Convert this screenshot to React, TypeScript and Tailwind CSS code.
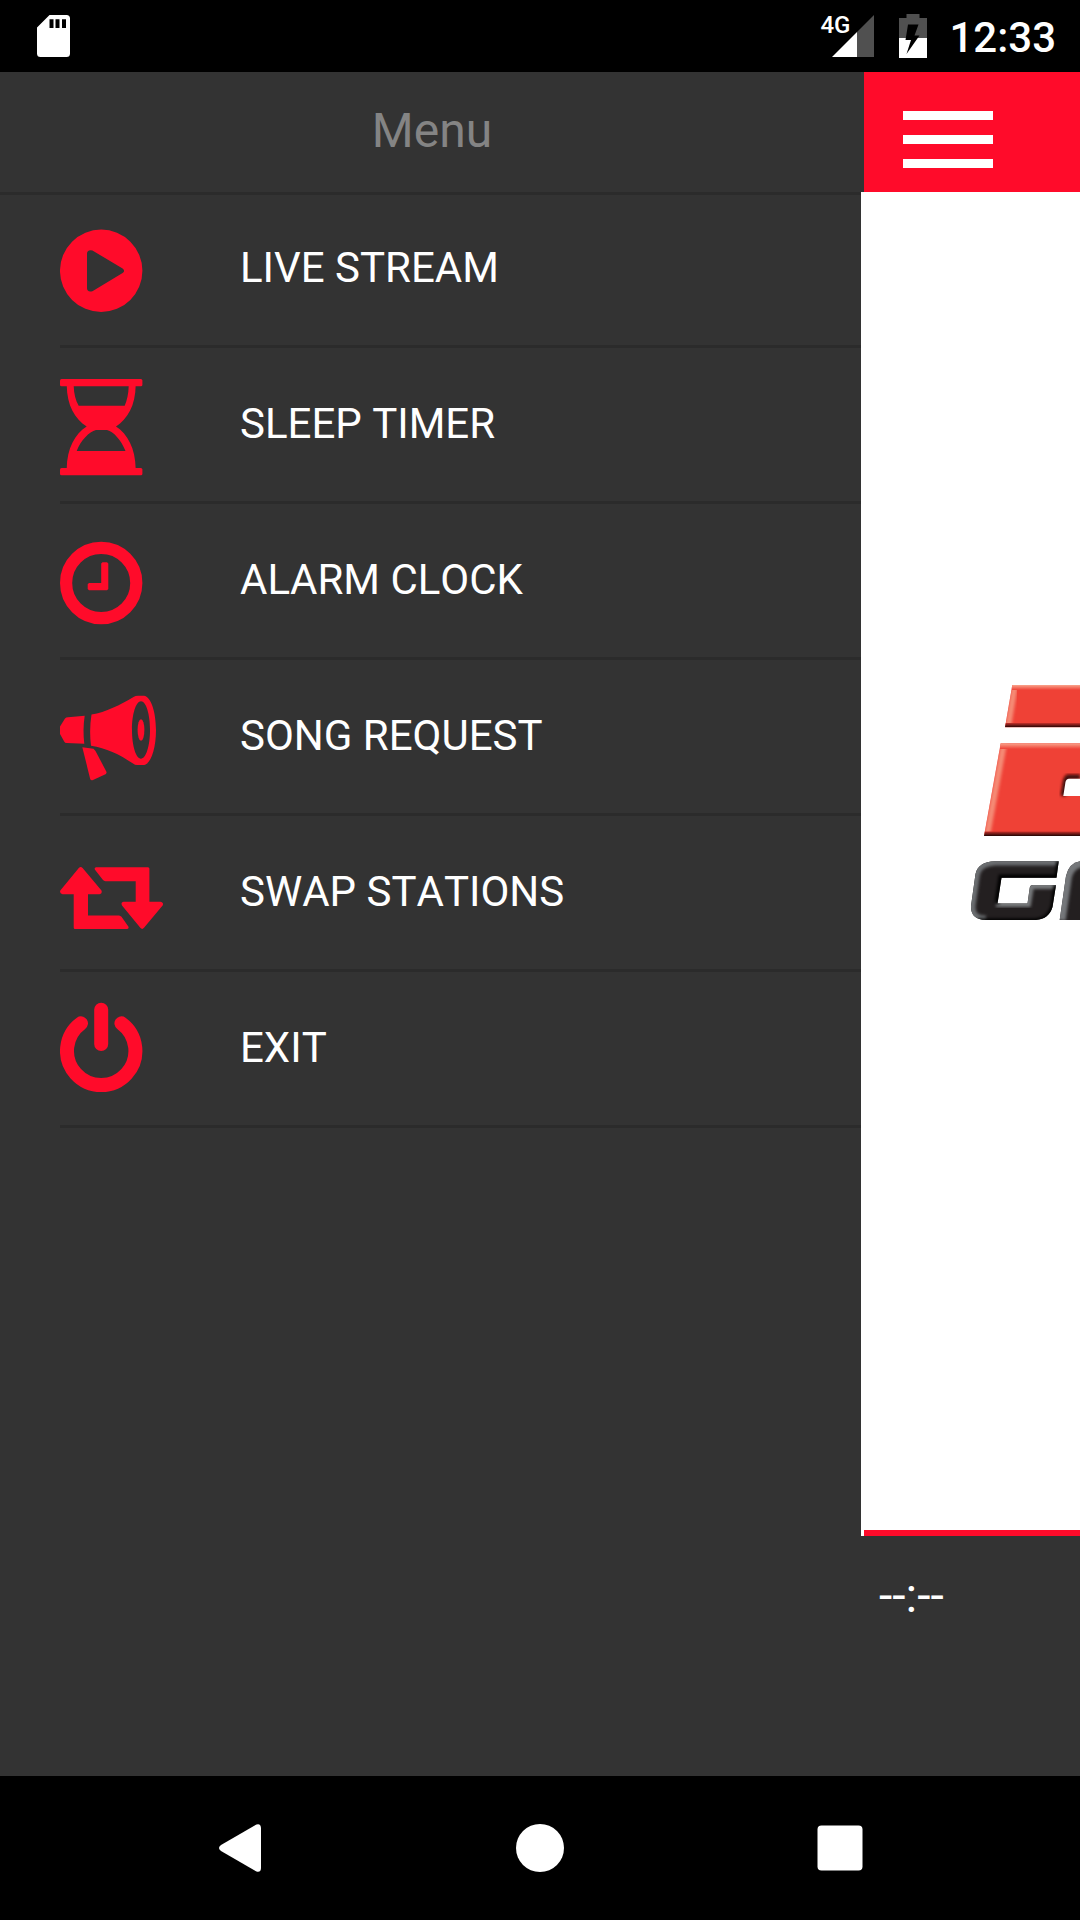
import React, { useState } from "react";

const menuItems = [
  { id: "live", title: "LIVE STREAM" },
  { id: "sleep", title: "SLEEP TIMER" },
  { id: "alarm", title: "ALARM CLOCK" },
  { id: "song", title: "SONG REQUEST" },
  { id: "swap", title: "SWAP STATIONS" },
  { id: "exit", title: "EXIT" },
];

const iconsMap: Record<string, React.ReactNode> = {
  live: (
    <path
      fillRule="evenodd"
      d="M41.2 13.6a41.2 41.2 0 1 0 0 82.4a41.2 41.2 0 1 0 0-82.4zM32.4 34.5L62.6 52.4Q65.600 54.700 62.600 57L32.400 75.200Q27 76.500 27 72V38Q27 33.500 32.400 34.500z"
    />
  ),
  sleep: (
    <>
      <rect x="0" y="7" width="82.4" height="7.200" rx="1.500" />
      <rect x="0" y="96" width="82.400" height="7.200" rx="1.500" />
      <path
        fillRule="evenodd"
        d="M6.700 13C7 34 15 47 26.700 54.500C15 62 7 76 6.700 97H75.700C75.400 76 67.400 62 56 54.500C67.400 47 75.400 34 75.700 13zM13.700 14H68.700C68.500 22 67 28 64.700 33.800H18.700C15.500 28 14 22 13.700 14zM36 58H47C54 60 61 68 65.500 79H16.700C21 68 29 60 36 58z"
      />
    </>
  ),
  alarm: (
    <>
      <circle cx="41.200" cy="55" r="35.100" fill="none" stroke="currentColor" strokeWidth="12.200" />
      <path d="M42.500 34.300H47L48.300 35.500V61L47 62.300H29L27.700 61V56.300L29 55H41.200V35.500z" />
    </>
  ),
  song: (
    <>
      <path d="M0 42.500L5 34.500Q6 33.200 8 33.200L24.700 31.800Q22.600 46 24.300 59.700L6.500 59Q5 59 4.200 57.500L0 50z" />
      <path
        fillRule="evenodd"
        d="M31.500 30.600C46 28 60 21 73.500 13Q75.500 11.700 78 11.700H84C91 12.500 96 28 96 46.200C96 64 91 80 84 81H77Q75 81 73 79.500C59 70 46 64 31 61.700Q29 46 31.500 30.600zM81 17.300C76 17.300 72 30 72 46S76 74.700 81 74.700S90 62 90 46S86 17.300 81 17.300z"
      />
      <ellipse cx="81" cy="46" rx="3.400" ry="10.800" />
      <path d="M22.300 63.200L33.500 64.800L35.500 67L46.300 87.500Q47 89.200 45.500 90.200L33 96Q31 96.700 30.200 95z" />
    </>
  ),
  swap: (
    <>
      <path d="M18.800 28Q20.700 26 22.600 28L41.500 50.500Q42.500 53.800 39.500 54.300H28V75.400H59Q60.500 75.600 61.500 76.800L68.500 86.800Q69 88.800 67.300 89H15Q13.700 89 13.700 87.500V54.300H2.500Q-.800 53.500.300 50.500z" />
      <path d="M36 27.300H88Q89.400 27.300 89.400 28.800V61.700H100.500Q103.800 62.300 102.800 65.300L84 87.800Q82.200 90 80.300 87.800L62 65.500Q60.500 62.300 63.500 61.700H75.700V41.200H45.500Q43.800 41 42.800 39.800L34.800 29.500Q34 27.500 36 27.300z" />
    </>
  ),
  exit: (
    <g fill="none" stroke="currentColor" strokeWidth="14" strokeLinecap="round">
      <path d="M41.200 13.800V48" />
      <path d="M21 27.300A34.200 34.200 0 1 0 61.400 27.300" />
    </g>
  ),
};

const StatusBar = () => (
  <div className="flex h-[72px] items-center bg-black pl-[37px] pr-6 text-white">
    {/* SD card */}
    <svg width="33" height="42" viewBox="0 0 33 42" fill="currentColor">
      <path
        fillRule="evenodd"
        d="M12.500 0H29.500Q33 0 33 3.500V38.500Q33 42 29.500 42H3.500Q0 42 0 38.500V12.500zM12.500 4.300V13H16.500V4.300zM18.500 4.300V13H22.500V4.300zM25 4.300V13H29V4.300z"
      />
    </svg>
    <div className="ml-auto flex items-center">
      {/* Signal */}
      <div className="relative">
        <span className="absolute -left-3 -top-1 text-2xl font-medium leading-[28px]">4G</span>
        <svg width="42" height="42" viewBox="0 0 42 42">
          <path d="M42 0V42H25V17z" fill="#505050" />
          <path d="M25 17V42H0z" fill="#fff" />
        </svg>
      </div>
      {/* Battery */}
      <svg className="ml-[25px]" width="28" height="44" viewBox="0 0 28 44">
        <path d="M7.500 0H20.500V4H28V24H0V4H7.500z" fill="#505050" />
        <path d="M0 24H28V44H0z" fill="#fff" />
        <path d="M9 10.500H19.500L15.500 21.500H20.500L7.500 40L12 26H6.500z" fill="#000" />
      </svg>
      <span className="ml-[22px] pt-[3px] text-[42px] font-medium leading-[48px]">12:33</span>
    </div>
  </div>
);

const Drawer = ({ active, onSelect }: { active: string; onSelect: (id: string) => void }) => (
  <aside className="w-[calc(80%-3px)] shrink-0">
    <h1 className="relative h-[120px] pl-[3px] text-center text-5xl leading-[118px] text-[#848484] shadow-[0_3px_0_#2b2b2b]">
      Menu
    </h1>
    <nav>
      <ul className="pl-[60px]">
        {menuItems.map((item) => (
          <li key={item.id} className="border-b-[3px] border-[#2b2b2b]">
            <button
              onClick={() => onSelect(item.id)}
              aria-current={active === item.id}
              className="flex h-[153px] w-full items-center text-left"
            >
              <span className="w-[180px] text-[#ff0b2a]">
                <svg width="105" height="105" viewBox="0 0 105 105" fill="currentColor">
                  {iconsMap[item.id]}
                </svg>
              </span>
              <span className="pb-[2px] text-[42px] leading-[48px] text-white [font-kerning:none]">
                {item.title}
              </span>
            </button>
          </li>
        ))}
      </ul>
    </nav>
  </aside>
);

const StationLogo = () => (
  <svg width="112" height="242" viewBox="0 0 112 242">
    <defs>
      <linearGradient id="rim" x1="0" y1="0" x2="0" y2="1">
        <stop offset="0" stopColor="#f9a48c" />
        <stop offset="1" stopColor="#ef4136" />
      </linearGradient>
      <linearGradient id="base" x1="0" y1="0" x2="0" y2="1">
        <stop offset="0" stopColor="#c5302a" />
        <stop offset="1" stopColor="#200504" />
      </linearGradient>
      <filter id="soft" x="-20%" y="-20%" width="140%" height="140%">
        <feGaussianBlur stdDeviation="1.500" />
      </filter>
      <clipPath id="barTop">
        <path d="M44.300 5H112V47.300H37z" />
      </clipPath>
      <clipPath id="barBottom">
        <path d="M32.700 63.300H112V156H16z" />
      </clipPath>
      <clipPath id="letterG">
        <path d="M90.700 181.300H27Q10 182 7.500 194L3 226Q2.500 240 18 240H68Q81 239 84.500 227L88 205H65Q62 205 61.700 208L59.500 223.500H29.500L33.500 197.700H88.500z" />
      </clipPath>
      <clipPath id="letterN">
        <path d="M112 181.300Q101 183 98 196L91.700 240H112z" />
      </clipPath>
    </defs>

    <g clipPath="url(#barTop)">
      <path d="M30 0H112V50H30z" fill="#ef4136" />
      <path d="M47 5L40 47" stroke="#f58b76" strokeWidth="6" filter="url(#soft)" />
      <path d="M44 5H112V10H44z" fill="url(#rim)" />
      <path d="M30 43H112V47.300H30z" fill="url(#base)" />
    </g>

    <g clipPath="url(#barBottom)">
      <path d="M10 60H112V160H10z" fill="#ef4136" />
      <path d="M36 63L19 156" stroke="#f58b76" strokeWidth="6" filter="url(#soft)" />
      <path d="M32 63.300H112V69H32z" fill="url(#rim)" />
      <path d="M10 151.500H112V156H10z" fill="url(#base)" />
    </g>
    <path d="M112 97H99.500Q98 98 97.500 101L95 116" fill="none" stroke="#3b0907" strokeWidth="5" filter="url(#soft)" />
    <path d="M112 117.500H94" fill="none" stroke="#f9a48c" strokeWidth="4" filter="url(#soft)" />
    <path d="M101 98.800H112V116H95.300L97.500 102Q98 99 101 98.800z" fill="#fff" />

    <g clipPath="url(#letterG)">
      <path d="M0 180H92V242H0z" fill="#231f20" />
      <path d="M92 181H27Q10 182 7.500 194L3 226Q2.500 240 18 240" fill="none" stroke="#6b6d70" strokeWidth="9" filter="url(#soft)" />
      <path d="M91 206H63L60 224H28" fill="none" stroke="#77797c" strokeWidth="6" filter="url(#soft)" />
      <path d="M90 197H33L29 224M10 241H68Q81 240 85 227L88 205M91 181L89 197" fill="none" stroke="#050505" strokeWidth="5" filter="url(#soft)" />
    </g>
    <g clipPath="url(#letterN)">
      <path d="M90 180H112V242H90z" fill="#231f20" />
      <path d="M114 181Q101 183 98 196L91.700 240" fill="none" stroke="#75777a" strokeWidth="12" filter="url(#soft)" />
      <path d="M90 241H112" stroke="#050505" strokeWidth="5" filter="url(#soft)" />
    </g>
  </svg>
);

const NavigationBar = () => (
  <div className="grid h-36 grid-cols-3 items-center bg-black px-[90px] text-white">
    <button aria-label="Back" className="justify-self-center">
      <svg width="48" height="48" viewBox="0 0 48 48" fill="currentColor">
        <path d="M40.500.400Q44.800-.800 45 4V44Q44.800 48.800 40.500 47.600L5 27Q1 24 5 21z" />
      </svg>
    </button>
    <button aria-label="Home" className="justify-self-center">
      <svg width="48" height="48" viewBox="0 0 48 48" fill="currentColor">
        <circle cx="24" cy="24" r="24" />
      </svg>
    </button>
    <button aria-label="Overview" className="justify-self-center">
      <svg width="48" height="48" viewBox="0 0 48 48" fill="currentColor">
        <rect x="1.500" y="1.500" width="45" height="45" rx="4" />
      </svg>
    </button>
  </div>
);

export default function App() {
  const [active, setActive] = useState("live");

  return (
    <div className="flex min-h-screen flex-col overflow-hidden bg-[#333333] font-['Roboto',sans-serif]">
      <StatusBar />

      <div className="flex flex-1">
        <Drawer active={active} onSelect={setActive} />

        {/* Page pushed aside by the drawer */}
        <main className="flex min-w-0 flex-1 flex-col">
          <header className="ml-[3px] flex h-[120px] items-center bg-[#ff0b2a] pl-[39px] pt-[15px]">
            <button aria-label="Open menu" className="flex w-[90px] flex-col gap-[15px]">
              <span className="h-[9px] bg-white" />
              <span className="h-[9px] bg-white" />
              <span className="h-[9px] bg-white" />
            </button>
          </header>

          <div className="flex flex-1 flex-col bg-white">
            <div className="flex flex-1 items-start justify-end pt-[488px]">
              <StationLogo />
            </div>
            <div className="ml-[3px] h-[6px] bg-[#ff0b2a]" />
          </div>

          <footer className="h-60 pl-[18px] pt-[30px] text-5xl leading-[60px] text-white">--:--</footer>
        </main>
      </div>

      <NavigationBar />
    </div>
  );
}
